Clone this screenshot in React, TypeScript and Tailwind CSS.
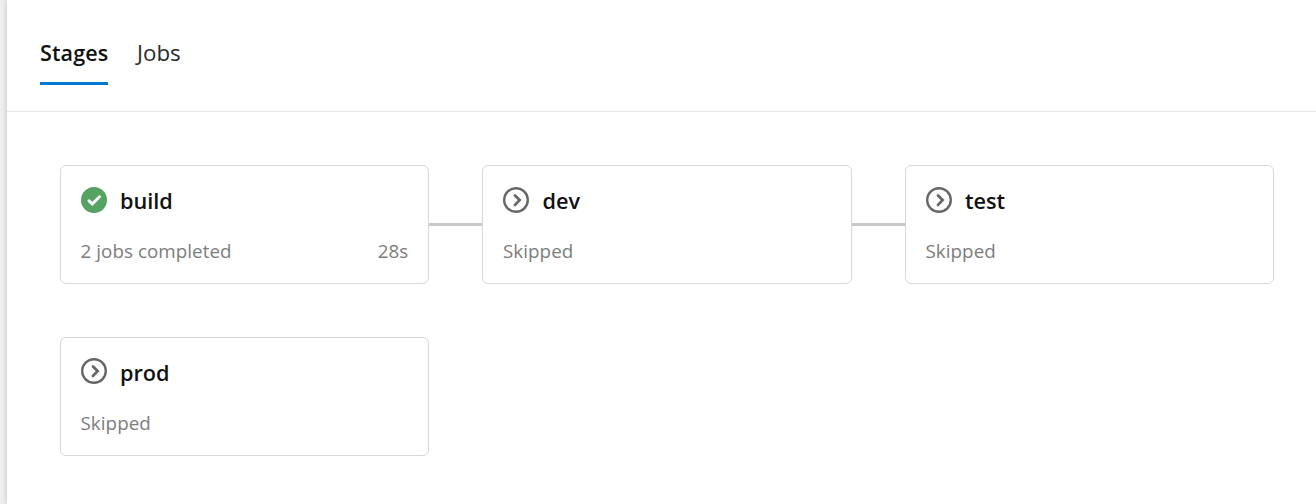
import React from "react";

type Stage = { name: string; status: "success" | "skipped"; summary: string; duration?: string };

const rows: Stage[][] = [
  [
    { name: "build", status: "success", summary: "2 jobs completed", duration: "28s" },
    { name: "dev", status: "skipped", summary: "Skipped" },
    { name: "test", status: "skipped", summary: "Skipped" },
  ],
  [{ name: "prod", status: "skipped", summary: "Skipped" }],
];

function StatusIcon({ status }: { status: Stage["status"] }) {
  if (status === "success") {
    return (
      <svg className="size-[26px] shrink-0" viewBox="0 0 26 26" fill="none">
        <circle cx="13" cy="13" r="13" fill="#55a362" />
        <path d="M8 13.8 11.3 17 18.5 9.8" stroke="#fff" strokeWidth="3" strokeLinecap="round" />
      </svg>
    );
  }
  return (
    <svg className="size-[26px] shrink-0" viewBox="0 0 26 26" fill="none" stroke="#666">
      <circle cx="13" cy="13" r="11.8" strokeWidth="2.4" />
      <path d="M12 8.5 16.6 13.1 12 17.9" strokeWidth="2.8" strokeLinecap="round" />
    </svg>
  );
}

function StageCard({ stage, raised }: { stage: Stage; raised: boolean }) {
  return (
    <div className="flex h-[119px] w-[369.3px] shrink-0 flex-col rounded-[6px] border border-[#d8d8d8] bg-white px-5">
      <div className="flex h-[70px] items-center gap-[13px]">
        <div className={raised ? "pb-1" : "pb-0.5"}>
          <StatusIcon status={stage.status} />
        </div>
        <span className="text-[21.7px] leading-[30px] font-semibold text-[#111]">{stage.name}</span>
      </div>
      <div className="flex h-[30px] items-center justify-between text-[18.8px] tracking-[0.06px] text-[#7c7c7c]">
        <span className="-ml-[0.5px]">{stage.summary}</span>
        <span>{stage.duration}</span>
      </div>
    </div>
  );
}

export default function App() {
  return (
    <div className="flex h-[504px] w-full overflow-hidden bg-[#f0f0f0] pl-[7px] font-['Open_Sans','Noto_Sans',sans-serif]">
      <main className="min-w-0 flex-1 bg-white shadow-[0_0_6px_rgba(0,0,0,0.22)]">
        <nav className="flex h-[112px] items-start gap-7 border-b border-[#e6e6e6] pt-[37px] pl-[33px]">
          <div className="flex h-12 w-[68px] flex-col border-b-[3px] border-[#0078d4] text-[21.5px] leading-[32px] font-semibold tracking-[0.15px] text-[#111]">
            <span>Stages</span>
          </div>
          <div className="pl-px text-[22.3px] leading-[32px] text-[#2a2a2a]">Jobs</div>
        </nav>
        <section className="flex flex-col gap-[53px] pt-[53px] pl-[53px]">
          {rows.map((row, r) => (
            <div key={r} className="flex items-center">
              {row.map((stage, i) => (
                <React.Fragment key={stage.name}>
                  {i > 0 && <div className="h-[3px] w-[53.2px] shrink-0 bg-[#c8c8c8]" />}
                  <StageCard stage={stage} raised={r > 0} />
                </React.Fragment>
              ))}
            </div>
          ))}
        </section>
      </main>
    </div>
  );
}
